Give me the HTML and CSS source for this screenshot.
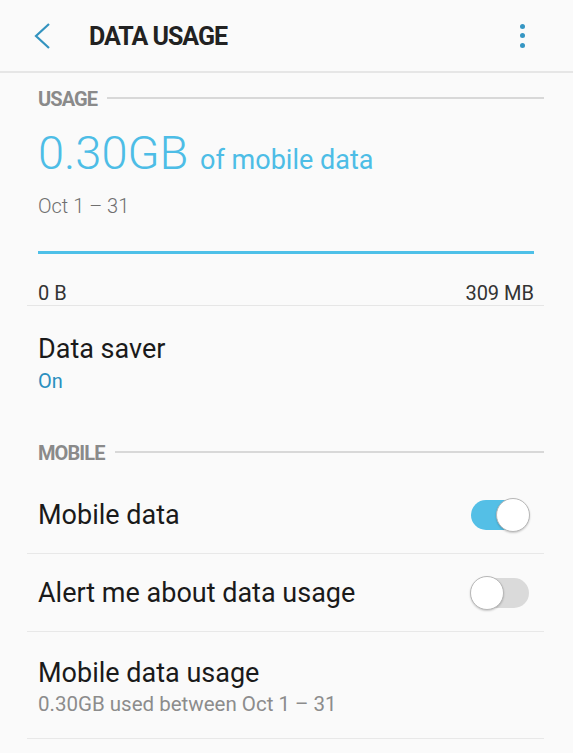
FILE: index.html
```html
<!DOCTYPE html>
<html>
<head>
  <title>Data usage</title>
  <link rel="stylesheet" href="styles.css">
</head>
<body>

  <header class="topbar">
    <svg class="back" width="17" height="26" viewBox="0 0 17 26">
      <polyline points="15,1 2,13 15,25" fill="none" stroke="#3393bf" stroke-width="2.2"/>
    </svg>
    <h1 class="title">DATA USAGE</h1>
    <div class="more"><i></i><i></i><i></i></div>
  </header>

  <main class="list">
    <div class="section-head"><span>USAGE</span></div>

    <div class="usage">
      <div class="amount"><span class="big">0.30GB</span> <span class="of">of mobile data</span></div>
      <div class="period">Oct 1 – 31</div>
      <div class="bar"></div>
      <div class="range"><span>0 B</span><span>309 MB</span></div>
    </div>

    <div class="saver">
      <div class="item-title">Data saver</div>
      <div class="status">On</div>
    </div>

    <div class="section-head"><span>MOBILE</span></div>

    <div class="row first">
      <div class="item-title">Mobile data</div>
      <div class="switch on"><span class="knob"></span></div>
    </div>
    <div class="row">
      <div class="item-title">Alert me about data usage</div>
      <div class="switch"><span class="knob"></span></div>
    </div>
    <div class="detail">
      <div class="item-title">Mobile data usage</div>
      <div class="sub">0.30GB used between Oct 1 – 31</div>
    </div>
  </main>

</body>
</html>
```

FILE: styles.css
```css
body {
  font-family: Roboto, "Liberation Sans", sans-serif;
  background: #fafafa;
  margin: 0;
  color: #1a1a1a;
}

.topbar {
  display: flex;
  align-items: center;
  height: 71px;
  padding-left: 34px;
  border-bottom: 2px solid #e6e6e6;
}

.back {
  display: block;
}

.title {
  margin: 2px 0 0 38px;
  font-size: 25px;
  line-height: 25px;
  font-weight: 700;
  letter-spacing: -1px;
  color: #222;
}

.more {
  margin-left: auto;
  margin-right: 48px;
  display: flex;
  flex-direction: column;
  gap: 4.5px;
}

.more i {
  display: block;
  width: 5px;
  height: 5px;
  border-radius: 50%;
  background: #3596c3;
}

.list {
  margin: 0 29px 0 27px;
}

.section-head {
  display: flex;
  align-items: center;
  padding: 14px 0 0 11px;
  font-size: 20px;
  line-height: 24px;
  font-weight: 700;
  letter-spacing: -0.9px;
  color: #8a8a8a;
}

.section-head::after {
  content: "";
  flex: 1;
  height: 2px;
  margin: 0 0 3px 10px;
  background: #d8d8d8;
}

.usage {
  padding: 0 10px 1px 11px;
  border-bottom: 1px solid #e6e6e6;
}

.amount {
  margin-top: 16px;
  font-size: 47px;
  line-height: 52px;
  color: #4dbde6;
}

.big {
  font-weight: 300;
}

.of {
  font-size: 27px;
  line-height: 1;
}

.period {
  margin-top: 15px;
  font-size: 20px;
  line-height: 24px;
  font-weight: 300;
  color: #6f6f6f;
}

.bar {
  margin-top: 33px;
  height: 3px;
  background: #4ec0e8;
}

.range {
  display: flex;
  justify-content: space-between;
  margin-top: 28px;
  font-size: 20px;
  line-height: 22px;
  color: #333;
}

.item-title {
  font-size: 27px;
  line-height: 30px;
}

.saver {
  padding: 28px 11px 35px;
}

.status {
  margin-top: 6px;
  font-size: 20px;
  line-height: 22px;
  color: #2a8fbf;
}

.row {
  display: flex;
  align-items: center;
  justify-content: space-between;
  height: 77px;
  padding: 0 15px 0 11px;
  border-bottom: 1px solid #e8e8e8;
}

.row.first {
  margin-top: 11px;
}

.switch {
  position: relative;
  width: 58px;
  height: 30px;
  border-radius: 15px;
  background: #dadada;
}

.switch.on {
  background: #54bfe6;
}

.knob {
  position: absolute;
  top: -2px;
  left: -1px;
  width: 34px;
  height: 34px;
  box-sizing: border-box;
  border: 1px solid #b8b8b8;
  border-radius: 50%;
  background: #fff;
  box-shadow: 0 1px 2px rgba(0,0,0,0.2);
}

.switch.on .knob {
  left: auto;
  right: -1px;
}

.detail {
  padding: 26px 11px 23px;
  border-bottom: 1px solid #e8e8e8;
}

.sub {
  margin-top: 5px;
  font-size: 20.5px;
  line-height: 22px;
  color: #8c8c8c;
}
```
